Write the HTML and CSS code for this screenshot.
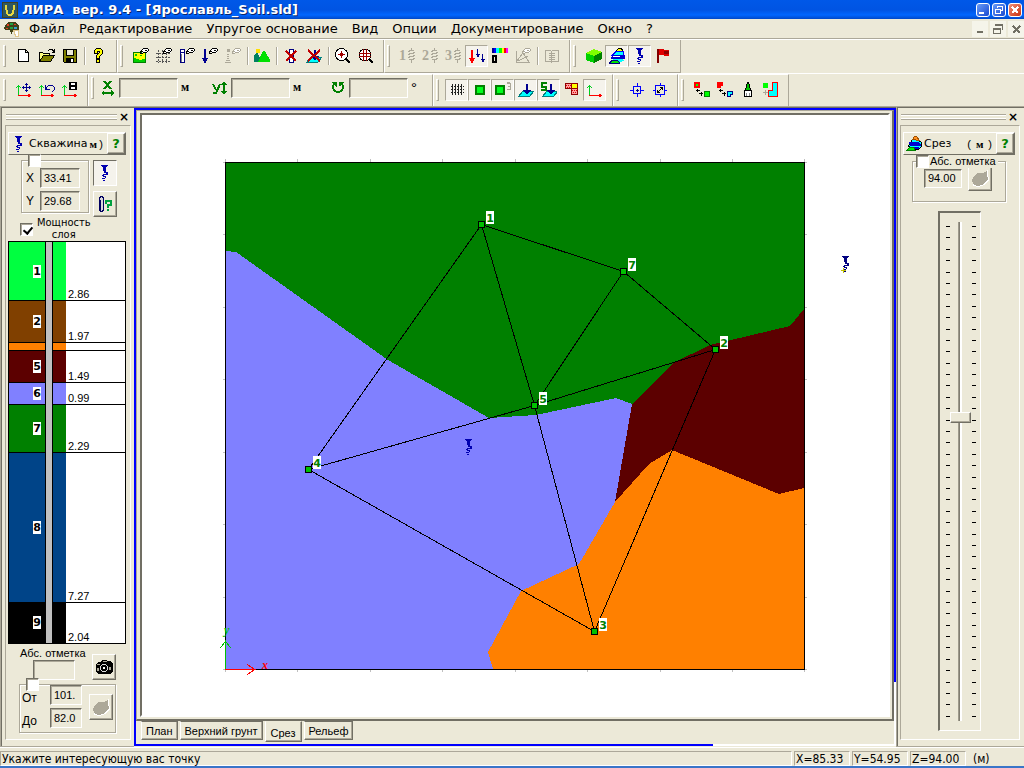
FILE: index.html
```html
<!DOCTYPE html>
<html lang="ru">
<head>
    <meta charset="UTF-8">
    <meta name="viewport" content="width=device-width, initial-scale=1.0">
    <title>ЛИРА вер. 9.4 - [Ярославль_Soil.sld]</title>
    <link rel="stylesheet" href="styles.css">
</head>
<body>

    <!-- shared icons -->
    <svg class="sprite" aria-hidden="true">
        <symbol id="bore" viewBox="0 0 16 16">
            <path d="M4 0h7v1H4zM5 1h5v1H5zM6 2h3v4H6zM7 6h2v2H7zM9 7h2v3H9zM6 9h3v1H6zM5 10h2v1H5zM6 11h3v1H6zM8 12h1v1H8zM5 13h3v1H5zM6 15h2v1H6z"/>
        </symbol>
        <symbol id="hand" viewBox="0 0 16 16">
            <path fill="#fff" d="M9 1h6v4h-4l-2 1z"/>
            <path d="M10 0h5v1h-5zM9 1h1v1H9zM8 2h1v1H8zM7 3h3v1H7zM7 4h1v2H7zM8 5h2v1H8zM10 4h4v1h-4zM12 2h2v1h-2zM15 1h1v2h-1zM14 3h1v1h-1z"/>
        </symbol>
        <symbol id="spring" viewBox="0 0 16 16">
            <path d="M9 2h5v1H9zM11 0h1v2h-1zM8 3h2v1H8zM9 5h5v1H9zM13 4h2v1h-2zM8 6h2v1H8zM9 8h5v1H9zM13 7h2v1h-2zM8 9h2v1H8zM9 11h5v1H9zM13 10h2v1h-2zM11 12h1v3h-1z"/>
        </symbol>
        <symbol id="layers" viewBox="0 0 16 16">
            <path fill="#ff0" stroke="#000" d="M6.500 3.500l3-3h3l2 4h-8z"/>
            <path fill="#0ff" stroke="#00f" d="M3 7.500l4-4h7l1 4z"/>
            <path fill="#0000d0" d="M2 9l3-2h11v4H2z"/>
            <path fill="#fff" d="M4 8h7v1H4z"/>
            <path fill="#0ff" d="M4 11h9l2 2-4 1H3z"/>
            <path fill="#00e000" stroke="#000080" d="M.5 15l3-3h5l2 3z"/>
        </symbol>
        <symbol id="slice" viewBox="0 0 16 16">
            <path fill="#0ff" stroke="#000" d="M2.500 9.500l4-6h5l4 3v4l-3 3h-8z"/>
            <path fill="#ff9020" stroke="#a05000" d="M6.500 3.500l2-3h2l3 4z"/>
            <path fill="#0000d0" d="M3 6h9l3 2v2H4zM5 11h8v2H6z"/>
            <path fill="#00f000" stroke="#008000" d="M.5 14.500l3-3h4l2 3z"/>
        </symbol>
        <symbol id="axes" viewBox="0 0 16 16">
            <path fill="#00d020" d="M2 3h1v11H2zM1 4h3v1H1zM0 6h1V5H0zM4 6h1V5H4z"/>
            <path fill="#f00" d="M2 13h13v1H2zM12 12h2v3h-2z"/>
        </symbol>
        <symbol id="blob" viewBox="0 0 18 18">
            <path fill="#fff" d="M3 8l4-4h6l4-3v4l1 6-4 5-7 2-5-1z"/>
            <path fill="#aca899" d="M2 8l4-4h6l4-2v3l1 5-4 5-6 2-4-1-2-4z"/>
        </symbol>
        <symbol id="plane" viewBox="0 0 16 16">
            <path fill="#0ff" stroke="#008080" d="M.5 14.500l4-5h11l-4 5z"/>
            <path fill="#000090" d="M8 2h2v6h3v1h-1v1h-1v1h-1v1H8v-1H7v-1H6V9H5V8h3z"/>
        </symbol>
    </svg>

    <header class="titlebar">
        <svg class="app-icon" viewBox="0 0 16 16"><path fill="#404020" d="M0 0h16v16H0z"/><path fill="#305860" d="M1 1h14v14H1z"/><path fill="none" stroke="#e8d840" stroke-width="2" d="M4 3v3c0 2 1 2 1 4s1 3 3 3 3-1 3-3 1-2 1-4V3"/></svg>
        <h1>ЛИРА&nbsp; вер. 9.4 - [Ярославль_Soil.sld]</h1>
        <div class="window-buttons">
            <button type="button" aria-label="Свернуть"><svg viewBox="0 0 12 12"><path fill="#fff" d="M2 8h5v2H2z"/></svg></button>
            <button type="button" aria-label="Восстановить"><svg viewBox="0 0 12 12"><path fill="none" stroke="#fff" d="M4.500 4V2.500h5v4H8M2.500 5.500h5v4h-5zM2 5h6"/></svg></button>
            <button type="button" class="close-red" aria-label="Закрыть"><svg viewBox="0 0 12 12"><path stroke="#fff" stroke-width="2" d="M3 3l6 6M9 3l-6 6"/></svg></button>
        </div>
    </header>

    <nav class="menubar">
        <svg class="menu-icon" viewBox="0 0 16 16"><path fill="#404018" d="M4 1h7l4 4v4l-2 1H9l-1 3H7l-1-4H2L0 8l1-4z"/><path fill="#e04020" d="M3 3h2v2H3zM10 3h2v1h-2zM2 7h2v1H2z"/><path fill="#20a040" d="M6 2h3v2H6zM6 6h3v2H6z"/><path fill="#30a0d0" d="M10 6h3v2h-3z"/><path fill="#fff" stroke="#e0c890" d="M9.500 9h5v6h-3z"/></svg>
        <a href="#">Файл</a>
        <a href="#">Редактирование</a>
        <a href="#">Упругое основание</a>
        <a href="#">Вид</a>
        <a href="#">Опции</a>
        <a href="#">Документирование</a>
        <a href="#">Окно</a>
        <a href="#">?</a>
        <div class="mdi-buttons">
            <button type="button" aria-label="Свернуть окно"><svg viewBox="0 0 16 16"><path fill="#716f64" d="M5 10h6v2H5z"/></svg></button>
            <button type="button" aria-label="Восстановить окно"><svg viewBox="0 0 16 16"><path fill="#716f64" d="M5 3h8v6h-1V5H5zM3 7h8v6H3zM4 9v3h6V9z" fill-rule="evenodd"/></svg></button>
            <button type="button" aria-label="Закрыть окно"><svg viewBox="0 0 16 16"><path stroke="#716f64" stroke-width="2" d="M5 5l7 7M12 5l-7 7"/></svg></button>
        </div>
    </nav>

    <div class="toolbar">
        <div class="band">
            <span class="grip"></span>
            <button type="button" class="tool" aria-label="Новый"><svg viewBox="0 0 16 16"><path fill="#fff" stroke="#000" d="M2.500 1.500h7l3 3v9h-10zM9.500 1.500v3h3"/></svg></button>
            <button type="button" class="tool" aria-label="Открыть"><svg viewBox="0 0 16 16"><path fill="#ffff80" stroke="#000" d="M.5 13.500v-9h3l1 1h6v2h-6z"/><path fill="#808000" stroke="#000" d="M.5 13.500l4-6h11l-4 6z"/><path fill="none" stroke="#000" d="M9 3l2-1.500h2l2 2M15.500 1v4M13 4.500h2"/></svg></button>
            <button type="button" class="tool" aria-label="Сохранить"><svg viewBox="0 0 16 16"><path fill="#808000" stroke="#000" d="M1.500 1.500h13v13h-12l-1-1z"/><path fill="#ece9d8" stroke="#000" d="M4.500 1.500h7v6h-7z"/><path d="M4 10h8v5H4z"/><path fill="#fff" d="M9 11h2v3H9z"/></svg></button>
            <span class="sep"></span>
            <button type="button" class="tool" aria-label="Справка"><svg viewBox="0 0 16 16"><path fill="#ff0" stroke="#000" d="M3.500 5.500v-3l2-2h4l2 2v3l-3 3v2h-3v-3l3-3v-1h-2v2zM5.500 11.500h3v3h-3z"/></svg></button>
        </div>
        <div class="band">
            <span class="grip"></span>
            <button type="button" class="tool" aria-label="Рельеф"><svg viewBox="0 0 16 16"><path fill="#ff0" stroke="#008000" d="M.5 4.500h12v10H.500z"/><path fill="#00d000" d="M1 10h2v1h3v1h3v-1h3v3H1zM2 6h2v2H2zM7 7h2v1H7z"/><use href="#hand"/></svg></button>
            <button type="button" class="tool" aria-label="Сетка"><svg viewBox="0 0 16 16"><path stroke="#555" stroke-dasharray="2 1" d="M2.500 2v13M6.500 2v13M10.500 2v13M0 5.500h14M0 9.500h14M0 13.500h14"/><use href="#hand"/></svg></button>
            <button type="button" class="tool" aria-label="Скважина"><svg viewBox="0 0 16 16"><path fill="#fff" stroke="#000080" d="M1.500 1.500h4v13h-4zM1.500 4.500h4"/><path fill="#808080" d="M2 6h1v8H2z"/><use href="#hand"/></svg></button>
            <button type="button" class="tool" aria-label="Нагрузка"><svg viewBox="0 0 16 16"><path fill="#000090" d="M2 1h2v9h2v1H5v2H4v2H2v-2H1v-2H0v-1h2z"/><use href="#hand"/></svg></button>
            <button type="button" class="tool" aria-label="Точка" disabled><svg viewBox="0 0 16 16"><path fill="#aca899" d="M2 1h3v3H2zM2 6h2v1H2zM2 8h2v1H2zM2 10h2v1H2zM1 12h4v1H1zM0 14h6v1H0z"/><use href="#hand" fill="#aca899"/></svg></button>
            <span class="sep"></span>
            <button type="button" class="tool" aria-label="Горы"><svg viewBox="0 0 16 16"><path fill="#ffe000" d="M2 1h4v4H2z"/><path fill="#008060" d="M0 14V8l3-4 5 10z"/><path fill="#00e000" d="M4 14l5-11h2l5 9v2z"/></svg></button>
            <span class="sep"></span>
            <button type="button" class="tool" aria-label="Удалить скважину"><svg viewBox="0 0 16 16"><path fill="#fff" stroke="#000080" d="M6.500 1.500h4v13h-4z"/><path stroke="#c00000" stroke-width="2" d="M3 3l10 10M13 3L3 13"/></svg></button>
            <button type="button" class="tool" aria-label="Удалить нагрузку"><svg viewBox="0 0 16 16"><use href="#plane"/><path stroke="#c00000" stroke-width="2" d="M2 2l12 11M14 2L2 13"/></svg></button>
            <span class="sep"></span>
            <button type="button" class="tool" aria-label="Увеличить"><svg viewBox="0 0 16 16"><circle cx="6.500" cy="6.500" r="6" fill="#fff" stroke="#000"/><path stroke="#a00000" stroke-width="1" d="M3 6.500h7M6.500 3v7"/><path fill="#a00000" d="M5 5h3v3H5z"/><path stroke="#000" stroke-width="2" d="M11 11l4 4"/></svg></button>
            <button type="button" class="tool" aria-label="Показать всё"><svg viewBox="0 0 16 16"><circle cx="7" cy="7" r="6" fill="#fff" stroke="#000"/><path stroke="#a00000" d="M1 5.500h12M1 8.500h12M5.500 1v12M8.500 1v12"/><path stroke="#000" stroke-width="2" d="M11 11l4 4"/></svg></button>
        </div>
        <div class="band">
            <span class="grip"></span>
            <button type="button" class="tool gray" aria-label="C1" disabled><b>1</b><svg viewBox="6 0 10 16"><use href="#spring" width="16" height="16"/></svg></button>
            <button type="button" class="tool gray" aria-label="C2" disabled><b>2</b><svg viewBox="6 0 10 16"><use href="#spring" width="16" height="16"/></svg></button>
            <button type="button" class="tool gray" aria-label="C3" disabled><b>3</b><svg viewBox="6 0 10 16"><use href="#spring" width="16" height="16"/></svg></button>
            <button type="button" class="tool pressed" aria-label="Нагрузки"><svg viewBox="0 0 16 16"><path fill="#f00" d="M2 2h2v8h2v1H5v2H4v2H2v-2H1v-2H0v-1h2z"/><path fill="#000090" d="M8 1h1v5h2v1h-1v2H8V7H7V6h1zM13 6h1v5h2v1h-1v2h-2v-2h-1v-1h1z"/></svg></button>
            <button type="button" class="tool" aria-label="Шкала"><svg viewBox="0 0 16 16"><path fill="#000090" d="M0 0h2v5H0z"/><path fill="#00f" d="M2 0h2v5H2z"/><path fill="#0ff" d="M4 0h3v5H4z"/><path fill="#0f0" d="M7 0h3v5H7z"/><path fill="#ff0" d="M10 0h2v5h-2z"/><path fill="#f00" d="M12 0h2v5h-2z"/><path fill="#f0f" d="M14 0h2v5h-2z"/><path fill="none" stroke="#000" stroke-width="2" d="M1 8h3v6H1z"/></svg></button>
            <button type="button" class="tool" aria-label="Редактор" disabled><svg viewBox="0 0 16 16"><path fill="none" stroke="#aca899" d="M1.500 3v11.500h13M1 14l7-9 6 9M3 13l10-5"/><use href="#hand" fill="#aca899"/></svg></button>
            <span class="sep"></span>
            <button type="button" class="tool" aria-label="Отчёт" disabled><svg viewBox="0 0 16 16"><path fill="none" stroke="#aca899" stroke-width="1" d="M1.500 2.500h5l1 1 1-1h6v11h-6l-1 1-1-1h-5zM5 5.500h6M5 7.500h6M5 9.500h6M5 11.500h6M7.500 3v12"/></svg></button>
        </div>
        <div class="band">
            <span class="grip"></span>
            <button type="button" class="tool" aria-label="Объём"><svg viewBox="0 0 16 16"><path fill="#80ff00" d="M0 5l8-4 8 3-8 4z"/><path fill="#00d000" d="M0 5l8 3v7l-8-3z"/><path fill="#008000" d="M8 8l8-4v7l-8 4z"/></svg></button>
            <button type="button" class="tool pressed" aria-label="Слои"><svg viewBox="0 0 16 16"><use href="#layers"/></svg></button>
            <button type="button" class="tool pressed" aria-label="Скважины"><svg viewBox="0 0 16 16"><use href="#bore" fill="#0000b0"/></svg></button>
            <button type="button" class="tool" aria-label="Флаг"><svg viewBox="0 0 16 16"><path fill="#800000" d="M2 1h2v14H2z"/><path fill="#e00000" d="M4 1h5v1h5v6H9V7H4z"/><path fill="#900000" d="M9 3h5v3H9z"/></svg></button>
        </div>
    </div>

    <div class="toolbar second">
        <div class="band">
            <span class="grip"></span>
            <button type="button" class="tool" aria-label="Перенести оси"><svg viewBox="0 0 16 16"><use href="#axes"/><path fill="#000090" d="M10 1h1v9h-1zM6 5h9v1H6zM9 2h3v1H9zM9 8h3v1H9zM7 4h1v3H7zM13 4h1v3h-1z"/></svg></button>
            <button type="button" class="tool" aria-label="Вернуть оси"><svg viewBox="0 0 16 16"><use href="#axes"/><path fill="none" stroke="#000090" d="M6.500 3v4h4M6.500 7l3-3.500h4l2 2v2l-3 3"/></svg></button>
            <button type="button" class="tool" aria-label="Сохранить оси"><svg viewBox="0 0 16 16"><use href="#axes"/><path d="M7 0h8v8H7z"/><path fill="#fff" d="M9 1h4v2H9zM9 5h4v2H9z"/></svg></button>
        </div>
        <div class="band coords">
            <span class="grip"></span>
            <label for="dx"><svg viewBox="0 0 14 16"><path fill="none" stroke="#008000" stroke-width="2" d="M3 1l7 8M10 1l-7 8"/><path fill="#008000" d="M0 13l3-3v2h7v-2l4 3-4 3v-2H3v2z"/></svg></label>
            <input type="text" id="dx" disabled>
            <span class="unit">м</span>
            <label for="dy"><svg viewBox="0 0 16 16"><path fill="none" stroke="#008000" stroke-width="2" d="M1 4l3 6M8 4l-4 9H1"/><path fill="#008000" d="M12 1l3 4h-2v6h2l-3 4-3-4h2V5H9z"/></svg></label>
            <input type="text" id="dy" disabled>
            <span class="unit">м</span>
            <label for="rot" class="rotation"><svg viewBox="0 0 16 16"><path fill="none" stroke="#008000" stroke-width="2" d="M5 3a5 5 0 1 0 6 0"/><path fill="#008000" d="M1 2h6v5zM9 2h5v1h-3v3H9z"/></svg></label>
            <input type="text" id="rot" disabled>
            <span class="degree">°</span>
        </div>
        <div class="band">
            <span class="grip"></span>
            <button type="button" class="tool pressed" aria-label="Сетка"><svg viewBox="0 0 16 16"><path stroke="#222" d="M3.500 2v12M6.500 2v12M9.500 2v12M12.500 2v12M2 4.500h13M2 7.500h13M2 10.500h13" stroke-dasharray="2 1"/></svg></button>
            <button type="button" class="tool pressed" aria-label="Узлы"><svg viewBox="0 0 16 16"><path fill="#00ff20" stroke="#008000" stroke-width="2" d="M4 4h8v8H4z"/></svg></button>
            <button type="button" class="tool pressed" aria-label="Номера узлов"><svg viewBox="0 0 16 16"><path fill="#00ff20" stroke="#008000" stroke-width="2" d="M1 4h8v8H1z"/><path fill="#aca899" d="M12 0h3v1h1v7h-4V7h3V5h-2V4h2V2h-3z"/></svg></button>
            <button type="button" class="tool pressed" aria-label="Плоскость"><svg viewBox="0 0 16 16"><use href="#plane"/></svg></button>
            <button type="button" class="tool pressed" aria-label="Номера плоскостей"><svg viewBox="0 0 16 16"><use href="#plane" x="1"/><path fill="#008000" d="M0 0h6v2H2v2h4v5H0V7h4V6H0z"/></svg></button>
            <button type="button" class="tool" aria-label="Материалы"><svg viewBox="0 0 16 16"><path fill="#ffa0a0" stroke="#900000" d="M1.500 1.500h6v5h-6zM7.500 6.500h6v6h-6z"/><path fill="#ff0" stroke="#900000" d="M7.500 1.500h6v5h-6z"/><path stroke="#e00000" stroke-dasharray="1 1" d="M2 3.500h5M3 5.500h4M8 8.500h5M9 10.500h4"/></svg></button>
            <button type="button" class="tool pressed" aria-label="Оси"><svg viewBox="0 0 16 16"><use href="#axes"/></svg></button>
        </div>
        <div class="band">
            <span class="grip"></span>
            <button type="button" class="tool" aria-label="Центр"><svg viewBox="0 0 16 16"><path fill="none" stroke="#00f" d="M4.500 4.500h7v7h-7zM8.500 1v3M8.500 12v3M1 8.500h3M12 8.500h3"/><path fill="#000090" d="M7 8h3v1H7zM8 7h1v3H8z"/></svg></button>
            <button type="button" class="tool" aria-label="Растянуть"><svg viewBox="0 0 16 16"><path fill="none" stroke="#00f" d="M3.500 3.500h9v9h-9zM8.500 1v2M8.500 13v2M1 8.500h2M13 8.500h2"/><path fill="none" stroke="#000" d="M5.500 10.500l5-5M8 5.500h2.500V8M5.500 8v2.500H8"/></svg></button>
        </div>
        <div class="band last">
            <span class="grip"></span>
            <button type="button" class="tool" aria-label="Копировать узел"><svg viewBox="0 0 16 16"><path fill="#0f0" stroke="#f00" stroke-width="2" d="M1 1h4v4H1z"/><path fill="none" stroke="#000" d="M3.500 7v3M2 8.500h4M5 11.500h4M7.500 10v4"/><path fill="#0f0" stroke="#008000" d="M10.500 9.500h5v5h-5z"/></svg></button>
            <button type="button" class="tool" aria-label="Копировать контур"><svg viewBox="0 0 16 16"><path fill="#f00" d="M0 0h6v4H4v2H0z"/><path fill="none" stroke="#000" d="M3.500 7v3M2 8.500h4M5 11.500h4M7.500 10v4"/><path fill="#0ff" stroke="#000080" d="M10.500 9.500h5v3h-2v2h-3z"/></svg></button>
            <button type="button" class="tool" aria-label="Кисть"><svg viewBox="0 0 16 16"><path fill="#00c000" stroke="#000" d="M7.500.5h1v1l1 1v3l2 3h-7l2-3v-3l1-1z"/><path fill="#fff" stroke="#000" d="M4.500 8.500h7v6h-7z"/><path stroke="#888" d="M6.500 11v3M9.500 11v3"/></svg></button>
            <button type="button" class="tool" aria-label="Добавить контур"><svg viewBox="0 0 16 16"><path fill="#0f0" d="M0 1h5v5H0z"/><path fill="#aca899" d="M2 8h1v5H2zM0 10h5v1H0z"/><path fill="#0ff" stroke="#f00" d="M9.500.5h5v14h-9v-6h4z"/></svg></button>
        </div>
    </div>

    <main>
        <aside class="panel">
            <div class="dock-grip"><span></span><button type="button" aria-label="Закрыть">×</button></div>
            <div class="panel-body">
                <div class="panel-head">
                    <svg viewBox="0 0 16 16"><use href="#bore" fill="#0000b0"/></svg>
                    <h2>Скважина</h2><span class="head-unit"><i>м</i>)</span>
                    <button type="button" class="help" aria-label="Справка">?</button>
                </div>
                <div class="bore-row">
                    <fieldset class="xy">
                        <input type="checkbox" class="over" id="fix-xy" aria-label="Задать координаты">
                        <label for="x">X</label><input type="text" id="x" value="33.41">
                        <label for="y">Y</label><input type="text" id="y" value="29.68">
                    </fieldset>
                    <div class="side-buttons">
                        <button type="button" class="square pressed" aria-label="Указать скважину"><svg class="small" viewBox="0 0 16 16"><use href="#bore" fill="#0000b0"/></svg></button>
                        <button type="button" class="square" aria-label="Сведения о скважине"><svg class="small" viewBox="0 0 16 16"><path fill="#d8d8d8" stroke="#000060" d="M2.500 2.500l1-2h2l1 2v11l-1 2h-2l-1-2z"/><path fill="#000060" d="M3 4h1v10H3z"/><path fill="none" stroke="#00a040" stroke-width="2" d="M9 8V5h5v4h-3v3M10 14h2"/></svg></button>
                    </div>
                </div>
                <div class="thickness">
                    <input type="checkbox" id="thick" checked>
                    <label for="thick">Мощность<br>слоя</label>
                </div>
                <ul class="column">
                    <li class="lime" style="flex-grow: 59"><b>1</b><span>2.86</span></li>
                    <li class="brown" style="flex-grow: 41"><b>2</b><span>1.97</span></li>
                    <li class="orange" style="flex-grow: 8"></li>
                    <li class="maroon" style="flex-grow: 31"><b>5</b><span>1.49</span></li>
                    <li class="violet" style="flex-grow: 21"><b>6</b><span>0.99</span></li>
                    <li class="green" style="flex-grow: 48"><b>7</b><span>2.29</span></li>
                    <li class="navy" style="flex-grow: 151"><b>8</b><span>7.27</span></li>
                    <li class="black" style="flex-grow: 41"><b>9</b><span>2.04</span></li>
                </ul>
                <div class="mark-row">
                    <div>
                        <label for="mark">Абс. отметка</label>
                        <input type="text" id="mark" disabled>
                    </div>
                    <button type="button" class="square" aria-label="Снимок"><svg viewBox="0 0 18 16"><path d="M1 5l3-2h2l1-2h4l1 1h4l2 3v7l-3 3H3l-2-2z"/><path fill="#aca899" d="M2 5h3v1H2zM8 2h4v1H8zM2 9h2v3H2zM14 8h2v3h-2z"/><circle cx="9" cy="9" r="3.500" stroke="#ddd"/><path fill="#fff" d="M8 8h2v2H8z"/></svg></button>
                </div>
                <fieldset class="range-box">
                    <input type="checkbox" class="over" id="fix-range" aria-label="Задать пределы">
                    <div class="range-fields">
                        <label for="from">От</label><input type="text" id="from" value="101.">
                        <label for="to">До</label><input type="text" id="to" value="82.0">
                    </div>
                    <button type="button" class="square" aria-label="Применить" disabled><svg viewBox="0 0 18 18"><use href="#blob"/></svg></button>
                </fieldset>
            </div>
        </aside>

        <section class="document">
            <div class="view">
                <svg class="map" viewBox="142 115 746 600">
                    <path class="scale" d="M225.500 159v513M297.500 159v513M370.500 159v513M442.500 159v513M515.500 159v513M587.500 159v513M660.500 159v513M732.500 159v513M804.500 159v513M223 162.500h584M223 234.500h584M223 307.500h584M223 379.500h584M223 452.500h584M223 524.500h584M223 597.500h584M223 669.500h584"/>
                    <rect x="225" y="162" width="580" height="508" fill="#008000"/>
                    <polygon fill="#8080ff" points="225,251 236,252 388,360 489,418 536,415 616,398 632,404 615,502 579,564 521,591 488,652 493,669 225,669"/>
                    <polygon fill="#5c0000" points="632,404 673,363 710,345 790,326 804,309 804,488 779,494 672,450 649,464 615,502"/>
                    <polygon fill="#ff8000" points="672,450 779,494 804,488 804,669 493,669 488,652 521,591 579,564 615,502 649,464"/>
                    <rect class="wire" x="225.500" y="162.500" width="579" height="507"/>
                    <path class="wire" d="M481.500 224.500L308.500 469.500L594.500 631.500L715.500 349.500L623.500 271.500L481.500 224.500L534.500 405.500L594.500 631.500M623.500 271.500L534.500 405.500M308.500 469.500L534.500 405.500L715.500 349.500"/>
                    <path fill="none" stroke="#00c000" d="M225.500 669V640M220.500 648l5-7 5 7"/>
                    <path fill="none" stroke="#f00" d="M225 669.500h30M247 664.500l8 5-8 5"/>
                    <text class="axis" x="224" y="634" fill="#00c000">y</text>
                    <text class="axis" x="262" y="669" fill="#f00">x</text>
                    <g class="nodes">
                        <rect x="478.500" y="221.500" width="6" height="6"/>
                        <rect x="620.500" y="268.500" width="6" height="6"/>
                        <rect x="712.500" y="346.500" width="6" height="6"/>
                        <rect x="531.500" y="402.500" width="6" height="6"/>
                        <rect x="305.500" y="466.500" width="6" height="6"/>
                        <rect x="591.500" y="628.500" width="6" height="6"/>
                    </g>
                    <path fill="#fff" d="M486 211h8v13h-8zM628 258h8v13h-8zM720 336h8v13h-8zM539 392h8v13h-8zM313 456h8v13h-8zM599 618h8v13h-8z"/>
                    <g class="numbers">
                        <text x="490" y="222">1</text>
                        <text x="632" y="269">7</text>
                        <text x="724" y="347">2</text>
                        <text x="543" y="403">5</text>
                        <text x="317" y="467">4</text>
                        <text x="603" y="629">3</text>
                    </g>
                    <use href="#bore" x="461" y="439" width="16" height="16" fill="#0000b0"/>
                    <use href="#bore" x="838" y="256" width="16" height="16" fill="#000080"/>
                    <path fill="#c0c000" d="M843 268h1v5h-1zM841 270h5v1h-5z"/>
                </svg>
            </div>
            <div class="tabs">
                <button type="button">План</button>
                <button type="button">Верхний грунт</button>
                <button type="button" class="active">Срез</button>
                <button type="button">Рельеф</button>
            </div>
        </section>

        <aside class="panel right">
            <div class="dock-grip"><span></span><button type="button" aria-label="Закрыть">×</button></div>
            <div class="panel-body">
                <div class="panel-head">
                    <svg viewBox="0 0 16 16"><use href="#slice"/></svg>
                    <h2>Срез</h2><span class="head-unit">( <i>м</i> )</span>
                    <button type="button" class="help" aria-label="Справка">?</button>
                </div>
                <fieldset class="level">
                    <div class="over caption"><input type="checkbox" id="abs"><label for="abs">Абс. отметка</label></div>
                    <input type="text" value="94.00" aria-label="Отметка среза">
                    <button type="button" class="square" aria-label="Применить" disabled><svg viewBox="0 0 18 18"><use href="#blob"/></svg></button>
                </fieldset>
                <div class="slider">
                    <div class="ticks"></div>
                    <input type="range" min="0" max="100" value="39" aria-label="Уровень среза">
                    <div class="ticks"></div>
                </div>
            </div>
        </aside>
    </main>

    <footer class="statusbar">
        <span class="hint">Укажите интересующую вас точку</span>
        <span class="cell">X=85.33</span>
        <span class="cell">Y=54.95</span>
        <span class="cell">Z=94.00</span>
        <span class="units">(м)</span>
    </footer>

    <script>
        // slider scale, both sides of the track
        document.querySelectorAll(".ticks").forEach(function(scale) {
            for (let i = 0; i < 44; i++) {
                scale.appendChild(document.createElement("i"));
            }
        });
    </script>

</body>
</html>
```
FILE: styles.css
```css
* {
    box-sizing: border-box;
}
body {
    margin: 0;
    height: 100vh;
    display: flex;
    flex-direction: column;
    background: #ece9d8;
    color: #000;
    font-family: "Liberation Sans", Arial, sans-serif;
    font-size: 11px;
    overflow: hidden;
}
h1, h2, ul, fieldset {
    margin: 0;
    padding: 0;
}
button, input {
    font: inherit;
    color: inherit;
    margin: 0;
    padding: 0;
    border-radius: 0;
}
svg {
    display: block;
    shape-rendering: crispEdges;
}
.sprite {
    width: 0;
    height: 0;
    position: absolute;
}

/* title and menu */
.titlebar {
    display: flex;
    align-items: center;
    height: 19px;
    flex: none;
    padding: 0 2px;
    background: linear-gradient(#0058e8 0, #0054e3 10px, #0066ff 15px, #0048c8 19px);
    color: #fff;
}
.app-icon {
    width: 16px;
    height: 16px;
}
.titlebar h1 {
    flex: 1;
    margin-left: 4px;
    font: bold 13px/19px "DejaVu Sans", sans-serif;
    text-shadow: 1px 1px #0a246a;
    white-space: nowrap;
}
.window-buttons, .mdi-buttons {
    display: flex;
    gap: 2px;
}
.window-buttons button {
    width: 14px;
    height: 14px;
    border: 1px solid #fff;
    border-radius: 3px;
    background: linear-gradient(135deg, #6a9cf8, #1848d0);
}
.window-buttons .close-red {
    background: linear-gradient(135deg, #f09078, #c83010);
}
.window-buttons svg {
    width: 12px;
    height: 12px;
}
.menubar {
    display: flex;
    align-items: center;
    gap: 14px;
    height: 20px;
    flex: none;
    padding: 0 0 0 4px;
    border-bottom: 1px solid #aca899;
    font: 13px/18px "DejaVu Sans", sans-serif;
}
.menubar a {
    color: #000;
    text-decoration: none;
}
.menu-icon {
    width: 16px;
    height: 16px;
    margin-right: -5px;
}
.mdi-buttons {
    margin-left: auto;
}
.mdi-buttons button {
    width: 16px;
    height: 16px;
    border: 0;
    background: #f5f4ea;
}

/* toolbars */
.toolbar {
    display: flex;
    height: 34px;
    flex: none;
    border-top: 1px solid #fff;
}
.toolbar.second {
    height: 33px;
}
.band {
    display: flex;
    align-items: center;
    padding: 0 6px 0 2px;
    border-left: 1px solid #fff;
    border-right: 1px solid #aca899;
    border-bottom: 1px solid #aca899;
}
.second .band {
    border-top: 1px solid #fff;
    border-bottom: 0;
    padding-bottom: 2px;
}
.band:first-child {
    border-left: 0;
    padding-left: 3px;
}
.grip {
    width: 3px;
    height: 22px;
    margin-right: 6px;
    border: 1px solid #fff;
    border-right-color: #aca899;
    border-bottom-color: #aca899;
}
.sep {
    width: 6px;
    height: 18px;
    background: linear-gradient(90deg, transparent 3px, #aca899 3px, #aca899 4px, #fff 4px, #fff 5px, transparent 5px);
}
.tool {
    display: flex;
    align-items: center;
    justify-content: center;
    width: 23px;
    height: 22px;
    border: 1px solid transparent;
    background: none;
}
.tool svg {
    width: 16px;
    height: 16px;
    flex: none;
}
.tool.gray {
    color: #aca899;
    font: bold 14px "Liberation Serif", serif;
}
.tool.gray svg {
    width: 10px;
    fill: #aca899;
}
.pressed, .square.pressed {
    border: 1px solid;
    border-color: #aca899 #fff #fff #aca899;
    background: #f5f3ec;
}
input[type="text"] {
    border: 1px solid;
    border-color: #716f64 #fff #fff #716f64;
    box-shadow: inset 1px 1px #aca899;
    background: #ece9d8;
    padding: 0 3px;
    min-width: 0;
}
.second .coords {
    padding: 0 16px 6px 2px;
}
.coords label {
    width: 19px;
}
.coords .rotation {
    width: 25px;
    padding-left: 6px;
}
.coords label svg {
    height: 16px;
    width: 16px;
}
.coords input[type="text"] {
    width: 59px;
    height: 20px;
}
.unit {
    width: 34px;
    padding-left: 3px;
    font: bold 12px "Liberation Serif", serif;
}
.degree {
    width: 8px;
    padding-left: 3px;
    font-size: 15px;
}

/* docked panels */
main {
    display: flex;
    flex: 1;
    min-height: 0;
    border-top: 1px solid #aca899;
    box-shadow: inset 0 1px #716f64;
}
.panel {
    display: flex;
    flex-direction: column;
    width: 134px;
    flex: none;
    padding: 4px 3px 6px 4px;
    border-left: 1px solid #aca899;
    border-bottom: 1px solid #aca899;
    box-shadow: inset 1px 1px #716f64;
}
.panel.right {
    width: 128px;
    padding: 4px 4px 6px 3px;
}
.dock-grip {
    display: flex;
    align-items: center;
    justify-content: space-between;
    height: 12px;
    flex: none;
}
.dock-grip span {
    flex: 1;
    height: 6px;
    margin-left: 1px;
    border-top: 1px solid #aca899;
    border-bottom: 1px solid #aca899;
    background: linear-gradient(#fff 1px, #ece9d8 1px, #ece9d8 3px, #fff 3px);
}
.dock-grip button {
    width: 14px;
    border: 0;
    background: none;
    font: bold 12px/12px "DejaVu Sans", sans-serif;
}
.panel-body {
    display: flex;
    flex-direction: column;
    flex: 1;
    min-height: 0;
    margin-top: 2px;
    padding: 6px 4px 6px 2px;
    border: 1px solid;
    border-color: #aca899 #fff #fff #aca899;
}
.panel-head {
    display: flex;
    align-items: center;
    height: 23px;
    flex: none;
    border: 1px solid;
    border-color: #fff #716f64 #716f64 #fff;
}
.panel-head svg {
    width: 16px;
    height: 16px;
    margin: 0 2px;
}
.panel-head h2 {
    font: 11px "DejaVu Sans", sans-serif;
}
.head-unit {
    display: flex;
    flex: 1;
    justify-content: space-between;
    align-items: center;
    padding: 0 4px 0 2px;
}
.head-unit i {
    font: bold 11px "Liberation Serif", serif;
}
.right .head-unit {
    padding-left: 16px;
}
.help, .square {
    border: 1px solid;
    border-color: #fff #716f64 #716f64 #fff;
    box-shadow: inset -1px -1px #aca899;
    background: #ece9d8;
}
.help {
    width: 18px;
    height: 21px;
    color: #008000;
    font: bold 13px "DejaVu Sans", sans-serif;
}
.square {
    display: flex;
    align-items: center;
    justify-content: center;
    width: 24px;
    height: 26px;
    flex: none;
}
.square svg {
    width: 18px;
    height: 18px;
    flex: none;
}
.square .small {
    width: 16px;
    height: 16px;
}
.square.pressed {
    border-color: #716f64 #fff #fff #716f64;
    box-shadow: none;
}
input[type="checkbox"] {
    appearance: none;
    width: 13px;
    height: 13px;
    flex: none;
    border: 1px solid;
    border-color: #716f64 #fff #fff #716f64;
    box-shadow: inset 1px 1px #aca899;
    background: #fff;
}
input[type="checkbox"]:checked::after {
    content: "";
    display: block;
    width: 4px;
    height: 7px;
    margin: 1px 4px;
    border: solid #000;
    border-width: 0 2px 2px 0;
    transform: rotate(40deg);
}
fieldset {
    position: relative;
    min-width: 0;
    border: 1px solid #aca899;
    box-shadow: 1px 1px #fff, inset 1px 1px #fff;
}
.over {
    position: absolute;
    top: -7px;
    left: 6px;
}
.bore-row {
    display: flex;
    gap: 4px;
    margin: 5px 8px 0 13px;
}
.xy {
    display: grid;
    grid-template-columns: 14px 40px;
    gap: 2px 0;
    width: 68px;
    height: 53px;
    padding: 6px 2px 0 4px;
    font: 12px "Liberation Sans", sans-serif;
    align-items: center;
}
.xy input[type="text"] {
    height: 20px;
    font-size: 11px;
}
.side-buttons {
    display: grid;
    gap: 5px;
}
.thickness {
    display: flex;
    align-items: center;
    gap: 4px;
    margin: 0 12px;
    font: 11px/12px "DejaVu Sans Condensed", "DejaVu Sans", sans-serif;
    text-align: center;
}

/* borehole column */
.column {
    position: relative;
    display: flex;
    flex-direction: column;
    flex: 1;
    min-height: 0;
    list-style: none;
    border: 1px solid #000;
    background: #fff;
}
.column::after {
    content: "";
    position: absolute;
    top: 0;
    bottom: 0;
    left: 36px;
    width: 6px;
    border: solid #000;
    border-width: 0 1px;
    background: #c0c0c0;
}
.column li {
    display: flex;
    flex-basis: 0;
    min-height: 0;
    align-items: center;
    border-bottom: 1px solid #000;
    background: linear-gradient(90deg, var(--soil) 57px, #fff 57px);
}
.column li:last-child {
    border-bottom: 0;
}
.column b {
    margin-left: 24px;
    width: 8px;
    background: #fff;
    font: bold 11px/13px "DejaVu Sans", sans-serif;
    text-align: center;
}
.column span {
    align-self: flex-end;
    margin-left: 27px;
    line-height: 12px;
}
.lime { --soil: #00ff40; }
.brown { --soil: #804000; }
.orange { --soil: #ff8000; }
.maroon { --soil: #5c0000; }
.violet { --soil: #8080ff; }
.green { --soil: #008000; }
.navy { --soil: #004488; }
.black { --soil: #000; }

.mark-row {
    display: flex;
    align-items: flex-end;
    justify-content: space-between;
    margin: 2px 10px 0 12px;
}
.mark-row div {
    display: grid;
    white-space: nowrap;
    width: 56px;
}
.mark-row label {
    line-height: 14px;
}
.mark-row input[type="text"] {
    width: 42px;
    height: 20px;
    margin-left: 13px;
}
.range-box {
    display: flex;
    align-items: center;
    justify-content: space-between;
    height: 49px;
    margin: 4px 10px 0 11px;
    padding: 0 2px;
    flex: none;
}
.range-fields {
    display: grid;
    grid-template-columns: 28px 32px;
    gap: 3px 0;
    align-items: end;
}
.range-fields label {
    font-size: 12px;
}
.range-fields input[type="text"] {
    height: 20px;
}
.level {
    display: flex;
    align-items: center;
    gap: 6px;
    height: 41px;
    flex: none;
    margin: 6px 9px 0;
    padding: 3px 11px 0;
}
.level input[type="text"] {
    width: 38px;
    height: 19px;
}
.caption {
    display: flex;
    gap: 1px;
    left: 3px;
    padding-right: 2px;
    background: #ece9d8;
    line-height: 13px;
    white-space: nowrap;
}
.slider {
    display: flex;
    justify-content: space-between;
    flex: 1;
    min-height: 0;
    width: 43px;
    margin: 9px auto 2px;
    padding: 9px 4px 9px 6px;
    border: solid;
    border-width: 2px 1px 1px 2px;
    border-color: #716f64 #fff #fff #716f64;
}
.ticks {
    display: flex;
    flex-direction: column;
    justify-content: space-between;
    width: 4px;
    padding: 4px 0;
}
.ticks i {
    height: 1px;
    background: #000;
}
input[type="range"] {
    appearance: none;
    writing-mode: vertical-lr;
    width: 21px;
    height: 100%;
    background: linear-gradient(90deg, transparent 8px, #aca899 8px, #716f64 10px, #fff 10px, #fff 12px, transparent 12px);
}
input[type="range"]::-webkit-slider-thumb {
    appearance: none;
    width: 21px;
    height: 11px;
    border: 1px solid;
    border-color: #fff #716f64 #716f64 #fff;
    box-shadow: inset -1px -1px #aca899;
    background: #ece9d8;
}

/* map window, blue highlight round it stops short at the bottom right */
.document {
    display: flex;
    flex-direction: column;
    flex: 1;
    min-width: 0;
    margin: 1px 0;
    padding: 2px;
    background:
        linear-gradient(#00f, #00f) 0 0 / 100% 2px no-repeat,
        linear-gradient(#00f, #00f) 0 0 / 2px 100% no-repeat,
        linear-gradient(#00f 90%, #fff 90%) 100% 0 / 2px 100% no-repeat,
        linear-gradient(90deg, #00f 76%, #fff 76%) 0 100% / 100% 2px no-repeat;
}
.view {
    flex: 1;
    min-height: 0;
    border: solid;
    border-width: 1px 2px 2px 1px;
    border-color: #aca899 #716f64 #716f64 #aca899;
    padding: 2px 2px 2px 3px;
    background: #ece9d8;
}
.map {
    width: 100%;
    height: 100%;
    border: 2px solid;
    border-color: #716f64 #fff #fff #716f64;
    background: #fff;
}
.scale {
    stroke: #c0c0c0;
}
.wire {
    fill: none;
    stroke: #000;
}
.nodes {
    fill: #00c000;
    stroke: #000;
}
.numbers {
    fill: #008000;
    font: bold 11px "DejaVu Sans", sans-serif;
    text-anchor: middle;
}
.axis {
    font: italic bold 12px "Liberation Serif", serif;
}
.tabs {
    display: flex;
    align-items: flex-start;
    gap: 2px;
    height: 23px;
    flex: none;
    padding-left: 5px;
}
.tabs button {
    height: 19px;
    padding: 0 4px;
    border: 1px solid;
    border-color: #716f64 #716f64 #716f64 #fff;
    box-shadow: inset -1px -1px #aca899;
    background: #ece9d8;
}
.tabs .active {
    height: 21px;
    padding: 3px 5px 0;
    border-top-color: #ece9d8;
}

/* status bar */
.statusbar {
    display: flex;
    gap: 2px;
    height: 21px;
    flex: none;
    padding-top: 3px;
    border-top: 1px solid #fff;
    border-bottom: 2px solid #3a75c8;
    font: 12px/14px "DejaVu Sans Condensed", "DejaVu Sans", sans-serif;
}
.statusbar span {
    padding: 0 1px;
    border: 1px solid;
    border-color: #aca899 #fff #fff #aca899;
    white-space: nowrap;
}
.statusbar .hint {
    flex: 1;
}
.statusbar .cell {
    width: 56px;
}
.statusbar .units {
    width: 56px;
    padding-left: 4px;
    border-color: transparent;
}
```
